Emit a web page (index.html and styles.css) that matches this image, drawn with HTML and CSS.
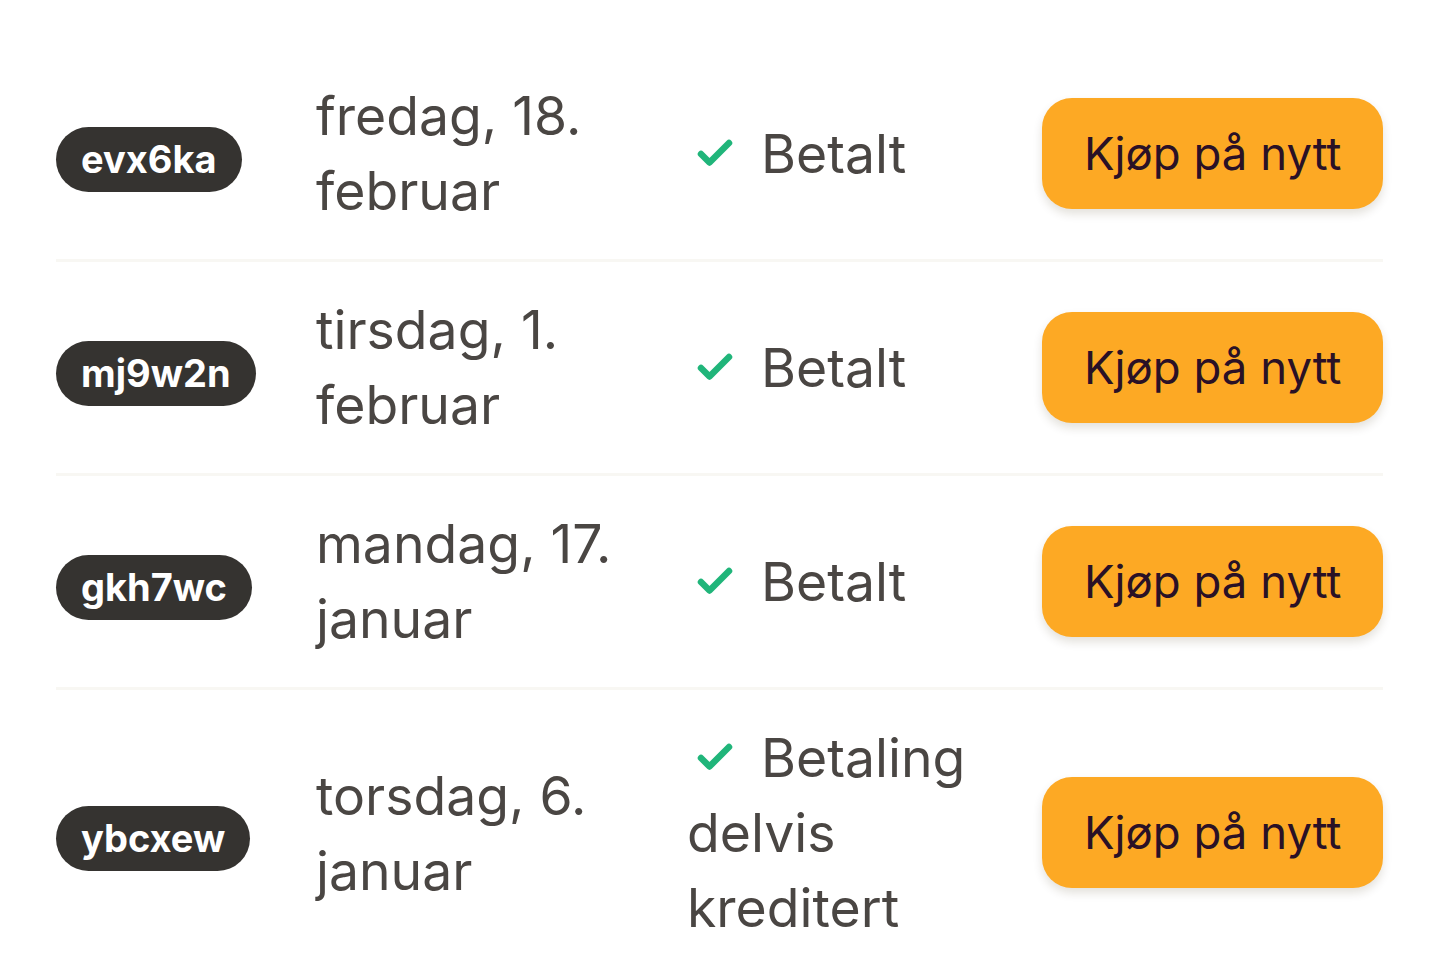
FILE: index.html
```html
<!DOCTYPE html>
<html lang="no">
<head>
<meta charset="utf-8">
<title>Ordrer</title>
<link rel="stylesheet" href="styles.css">
</head>
<body>
<div class="orders">
  <div class="row">
    <div class="cell cell-id"><span class="badge">evx6ka</span></div>
    <div class="cell cell-date">fredag, 18. februar</div>
    <div class="cell cell-status"><svg class="check" viewBox="0 0 36 28" width="36" height="28"><path d="M4 15 L12.5 23.5 L32 4"/></svg>Betalt</div>
    <div class="cell cell-action"><button class="btn">Kjøp på nytt</button></div>
  </div>
  <div class="row">
    <div class="cell cell-id"><span class="badge">mj9w2n</span></div>
    <div class="cell cell-date">tirsdag, 1. februar</div>
    <div class="cell cell-status"><svg class="check" viewBox="0 0 36 28" width="36" height="28"><path d="M4 15 L12.5 23.5 L32 4"/></svg>Betalt</div>
    <div class="cell cell-action"><button class="btn">Kjøp på nytt</button></div>
  </div>
  <div class="row">
    <div class="cell cell-id"><span class="badge">gkh7wc</span></div>
    <div class="cell cell-date">mandag, 17. januar</div>
    <div class="cell cell-status"><svg class="check" viewBox="0 0 36 28" width="36" height="28"><path d="M4 15 L12.5 23.5 L32 4"/></svg>Betalt</div>
    <div class="cell cell-action"><button class="btn">Kjøp på nytt</button></div>
  </div>
  <div class="row">
    <div class="cell cell-id"><span class="badge">ybcxew</span></div>
    <div class="cell cell-date">torsdag, 6. januar</div>
    <div class="cell cell-status"><svg class="check" viewBox="0 0 36 28" width="36" height="28"><path d="M4 15 L12.5 23.5 L32 4"/></svg>Betaling delvis kreditert</div>
    <div class="cell cell-action"><button class="btn">Kjøp på nytt</button></div>
  </div>
</div>
</body>
</html>
```
FILE: styles.css
```css
html, body {
  margin: 0;
  padding: 0;
  background: #ffffff;
}

body {
  font-family: Inter, "Noto Sans", "Liberation Sans", sans-serif;
  color: #4a4643;
}

.orders {
  padding: 48px 57px 0 56px;
}

.row {
  display: grid;
  grid-template-columns: 260px 371px 355px 1fr;
  align-items: center;
  padding: 30px 0 31px;
  border-bottom: 3px solid #f8f7f3;
}

.row:last-child {
  border-bottom: none;
}

.cell {
  font-size: 53.5px;
  line-height: 75px;
}

.cell-id {
  display: flex;
  align-items: center;
}

.badge {
  display: inline-block;
  margin-top: 12px;
  height: 65px;
  line-height: 65px;
  padding: 0 25px;
  border-radius: 33px;
  background: #353330;
  color: #ffffff;
  font-weight: 700;
  font-size: 38px;
}

.cell-date {
  padding-right: 40px;
}

.cell-status {
  padding-right: 20px;
}

.check {
  display: inline-block;
  vertical-align: 6px;
  margin-left: 10px;
  margin-right: 28px;
  fill: none;
  stroke: #20b57a;
  stroke-width: 6.5;
  stroke-linecap: round;
  stroke-linejoin: round;
}

.cell-action {
  display: flex;
  justify-content: flex-end;
}

.btn {
  font-family: Inter, "Noto Sans", "Liberation Sans", sans-serif;
  font-size: 45.5px;
  line-height: 67px;
  white-space: nowrap;
  padding: 22px 42px;
  border: none;
  border-radius: 30px;
  background: #fda924;
  color: #2a1126;
  box-shadow: 0 5px 10px rgba(60, 40, 0, 0.14);
  cursor: pointer;
}
```
